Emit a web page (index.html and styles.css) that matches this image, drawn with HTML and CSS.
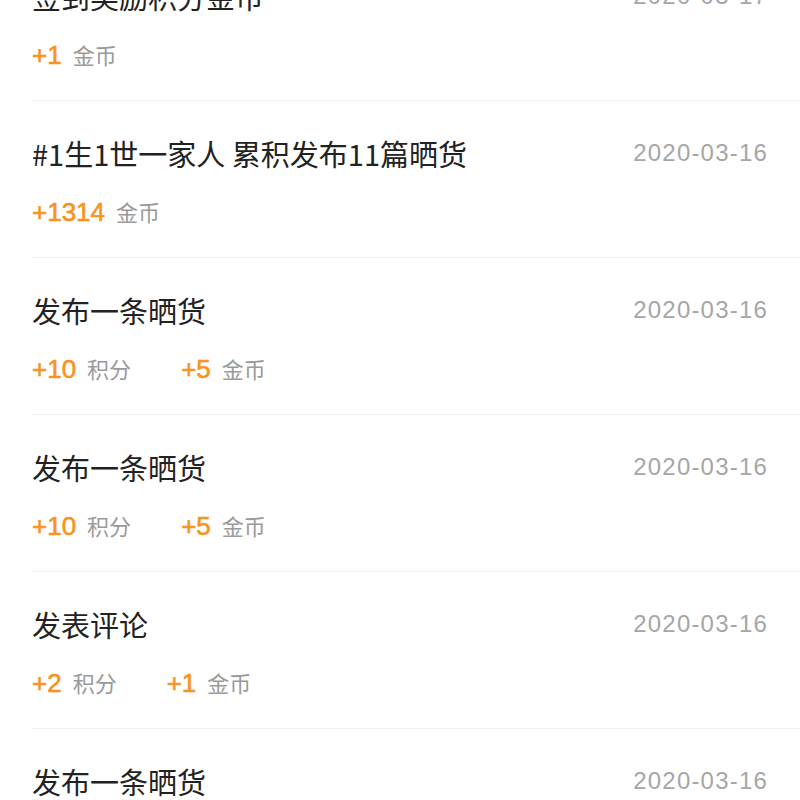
FILE: index.html
```html
<!DOCTYPE html>
<html lang="zh-CN">

<head>
    <meta charset="UTF-8">
    <meta name="viewport" content="width=device-width, initial-scale=1.0">
    <title>积分明细</title>
    <link rel="stylesheet" href="styles.css">
</head>

<body>
    <ul class="record-list">
        <li class="record">
            <div class="record-head">
                <span class="record-title">签到奖励积分金币</span>
                <span class="record-date">2020-03-17</span>
            </div>
            <div class="record-reward">
                <span class="reward"><b>+1</b>金币</span>
            </div>
        </li>
        <li class="record">
            <div class="record-head">
                <span class="record-title">#1生1世一家人 累积发布11篇晒货</span>
                <span class="record-date">2020-03-16</span>
            </div>
            <div class="record-reward">
                <span class="reward"><b>+1314</b>金币</span>
            </div>
        </li>
        <li class="record">
            <div class="record-head">
                <span class="record-title">发布一条晒货</span>
                <span class="record-date">2020-03-16</span>
            </div>
            <div class="record-reward">
                <span class="reward"><b>+10</b>积分</span>
                <span class="reward"><b>+5</b>金币</span>
            </div>
        </li>
        <li class="record">
            <div class="record-head">
                <span class="record-title">发布一条晒货</span>
                <span class="record-date">2020-03-16</span>
            </div>
            <div class="record-reward">
                <span class="reward"><b>+10</b>积分</span>
                <span class="reward"><b>+5</b>金币</span>
            </div>
        </li>
        <li class="record">
            <div class="record-head">
                <span class="record-title">发表评论</span>
                <span class="record-date">2020-03-16</span>
            </div>
            <div class="record-reward">
                <span class="reward"><b>+2</b>积分</span>
                <span class="reward"><b>+1</b>金币</span>
            </div>
        </li>
        <li class="record">
            <div class="record-head">
                <span class="record-title">发布一条晒货</span>
                <span class="record-date">2020-03-16</span>
            </div>
            <div class="record-reward">
                <span class="reward"><b>+10</b>积分</span>
                <span class="reward"><b>+5</b>金币</span>
            </div>
        </li>
    </ul>
</body>

</html>
```

FILE: styles.css
```css
body {
    margin: 0;
    background: #fff;
    font-family: "Liberation Sans", "Noto Sans CJK SC", sans-serif;
    overflow: hidden;
}

.record-list {
    list-style: none;
    margin: -56px 0 0 0;
    padding: 0;
}

.record {
    margin-left: 32px;
    padding: 32px 32px 28px 0;
    height: 96px;
    border-bottom: 1px solid #f0f0f0;
}

.record-head {
    display: flex;
    justify-content: space-between;
    align-items: center;
    height: 40px;
}

.record-title {
    font-family: "Noto Sans CJK SC", "Liberation Sans", sans-serif;
    font-size: 29px;
    line-height: 40px;
    color: #222;
}

.record-date {
    font-size: 24px;
    letter-spacing: 1.2px;
    color: #a6a6a6;
}

.record-reward {
    display: flex;
    align-items: center;
    gap: 50px;
    margin-top: 20px;
    height: 36px;
}

.reward {
    font-size: 22px;
    color: #9a9a9a;
}

.reward b {
    font-size: 26px;
    font-weight: normal;
    color: #f7931e;
    -webkit-text-stroke: 0.6px #f7931e;
    margin-right: 11px;
}
```
